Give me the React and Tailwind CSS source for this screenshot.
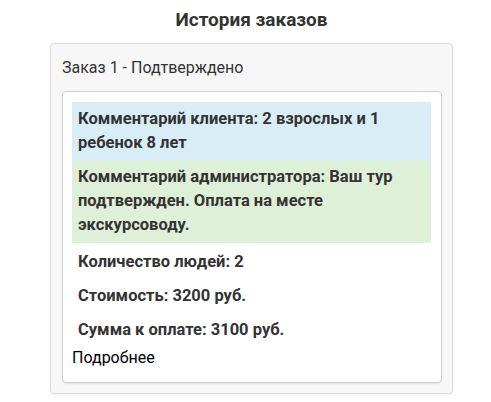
import React from 'react';

const order = {
  title: 'Заказ 1 - Подтверждено',
  clientComment: 'Комментарий клиента: 2 взрослых и 1 ребенок 8 лет',
  adminComment: 'Комментарий администратора: Ваш тур подтвержден. Оплата на месте экскурсоводу.',
  rows: ['Количество людей: 2', 'Стоимость: 3200 руб.', 'Сумма к оплате: 3100 руб.'],
};

const App = () => {
  return (
    <div className="w-[491px] h-[402px] bg-white text-[#333] font-['Roboto',sans-serif]">
      <h2 className="pt-[8px] h-[43px] w-[403px] ml-[50px] text-center text-[19px] font-bold leading-[24px]">
        История заказов
      </h2>

      <div className="ml-[50px] w-[403px] bg-[#f7f7f7] border border-[#dcdcdc] rounded-[4px] pt-[14px] pb-[10px] pl-[11px] pr-[10px] shadow-[0_1px_2px_rgba(0,0,0,0.05)]">
        <div className="text-[16px] leading-[20px] h-[33px]">{order.title}</div>

        <div className="bg-white border border-[#cfcfcf] rounded-[4px] pt-[10px] pb-[13px] pl-[9px] pr-[10px] shadow-[0_1px_2px_rgba(0,0,0,0.08)]">
          <div className="bg-[#d9edf7] px-[6px] py-[5px] text-[16.5px] font-bold leading-[24px]">
            {order.clientComment}
          </div>
          <div className="bg-[#dff0d8] px-[6px] pt-[5px] pb-[6px] text-[16.5px] font-bold leading-[24px]">
            {order.adminComment}
          </div>

          <div className="mt-[2px]">
            {order.rows.map((row, idx) => (
              <div key={idx} className="pl-[6px] h-[34px] text-[16.5px] font-bold leading-[34px]">
                {row}
              </div>
            ))}
          </div>

          <div className="text-[16px] leading-[22px] text-black">Подробнее</div>
        </div>
      </div>
    </div>
  );
};

export default App;
